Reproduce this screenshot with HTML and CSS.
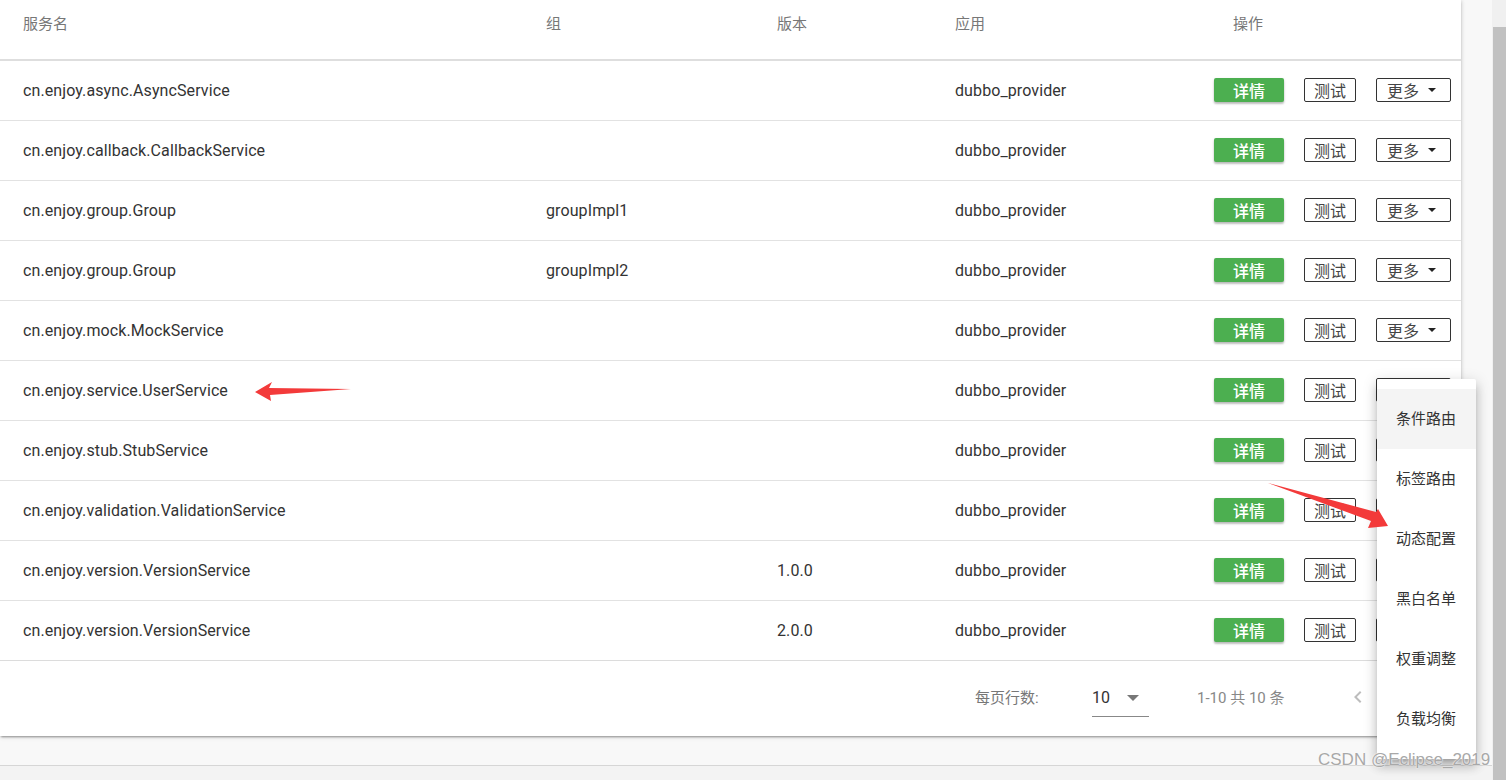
FILE: index.html
```html
<!DOCTYPE html>
<html lang="zh">
<head>
<meta charset="utf-8">
<title>服务查询</title>
<link rel="stylesheet" href="styles.css">
</head>
<body>
<div class="page">
  <div class="content">
    <div class="card">
      <div class="row head">
        <div class="c1">服务名</div>
        <div class="c2">组</div>
        <div class="c3">版本</div>
        <div class="c4">应用</div>
        <div class="c5 op-head">操作</div>
      </div>
      <div class="row">
        <div class="c1">cn.enjoy.async.AsyncService</div><div class="c2"></div><div class="c3"></div><div class="c4">dubbo_provider</div>
        <div class="c5 ops"><span class="btn detail">详情</span><span class="btn outline test">测试</span><span class="btn outline more">更多<i class="caret"></i></span></div>
      </div>
      <div class="row">
        <div class="c1">cn.enjoy.callback.CallbackService</div><div class="c2"></div><div class="c3"></div><div class="c4">dubbo_provider</div>
        <div class="c5 ops"><span class="btn detail">详情</span><span class="btn outline test">测试</span><span class="btn outline more">更多<i class="caret"></i></span></div>
      </div>
      <div class="row">
        <div class="c1">cn.enjoy.group.Group</div><div class="c2">groupImpl1</div><div class="c3"></div><div class="c4">dubbo_provider</div>
        <div class="c5 ops"><span class="btn detail">详情</span><span class="btn outline test">测试</span><span class="btn outline more">更多<i class="caret"></i></span></div>
      </div>
      <div class="row">
        <div class="c1">cn.enjoy.group.Group</div><div class="c2">groupImpl2</div><div class="c3"></div><div class="c4">dubbo_provider</div>
        <div class="c5 ops"><span class="btn detail">详情</span><span class="btn outline test">测试</span><span class="btn outline more">更多<i class="caret"></i></span></div>
      </div>
      <div class="row">
        <div class="c1">cn.enjoy.mock.MockService</div><div class="c2"></div><div class="c3"></div><div class="c4">dubbo_provider</div>
        <div class="c5 ops"><span class="btn detail">详情</span><span class="btn outline test">测试</span><span class="btn outline more">更多<i class="caret"></i></span></div>
      </div>
      <div class="row">
        <div class="c1">cn.enjoy.service.UserService</div><div class="c2"></div><div class="c3"></div><div class="c4">dubbo_provider</div>
        <div class="c5 ops"><span class="btn detail">详情</span><span class="btn outline test">测试</span><span class="btn outline more">更多<i class="caret"></i></span></div>
      </div>
      <div class="row">
        <div class="c1">cn.enjoy.stub.StubService</div><div class="c2"></div><div class="c3"></div><div class="c4">dubbo_provider</div>
        <div class="c5 ops"><span class="btn detail">详情</span><span class="btn outline test">测试</span><span class="btn outline more">更多<i class="caret"></i></span></div>
      </div>
      <div class="row">
        <div class="c1">cn.enjoy.validation.ValidationService</div><div class="c2"></div><div class="c3"></div><div class="c4">dubbo_provider</div>
        <div class="c5 ops"><span class="btn detail">详情</span><span class="btn outline test">测试</span><span class="btn outline more">更多<i class="caret"></i></span></div>
      </div>
      <div class="row">
        <div class="c1">cn.enjoy.version.VersionService</div><div class="c2"></div><div class="c3">1.0.0</div><div class="c4">dubbo_provider</div>
        <div class="c5 ops"><span class="btn detail">详情</span><span class="btn outline test">测试</span><span class="btn outline more">更多<i class="caret"></i></span></div>
      </div>
      <div class="row last">
        <div class="c1">cn.enjoy.version.VersionService</div><div class="c2"></div><div class="c3">2.0.0</div><div class="c4">dubbo_provider</div>
        <div class="c5 ops"><span class="btn detail">详情</span><span class="btn outline test">测试</span><span class="btn outline more">更多<i class="caret"></i></span></div>
      </div>
      <div class="footer">
        <span class="rpp">每页行数:</span>
        <span class="select"><span class="sel-val">10</span><i class="sel-caret"></i></span>
        <span class="range">1-10 共 10 条</span>
        <span class="pager">
          <svg width="24" height="24" viewBox="0 0 24 24"><path d="M15.41 16.59 10.83 12l4.58-4.59L14 6l-6 6 6 6z" fill="#bdbdbd"/></svg>
          <svg width="24" height="24" viewBox="0 0 24 24"><path d="M8.59 16.59 13.17 12 8.59 7.41 10 6l6 6-6 6z" fill="#bdbdbd"/></svg>
        </span>
      </div>
    </div>
    <div class="under"></div>
  </div>
  <div class="scrollbar"><div class="thumb"></div></div>

  <div class="menu">
    <div class="item active">条件路由</div>
    <div class="item">标签路由</div>
    <div class="item">动态配置</div>
    <div class="item">黑白名单</div>
    <div class="item">权重调整</div>
    <div class="item">负载均衡</div>
  </div>

  <svg class="arrows" width="1506" height="780" viewBox="0 0 1506 780">
    <polygon points="255,392 272,382 269,388 351,389 270,395 271,401" fill="#f33a3a"/>
    <polygon points="1268,483 1376,512 1378,509 1388,526 1368,528 1371,521" fill="#f33a3a"/>
  </svg>

  <div class="watermark">CSDN @Eclipse_2019</div>
</div>
</body>
</html>
```
FILE: styles.css
```css
* { box-sizing: border-box; }
html, body { margin: 0; padding: 0; }
body {
  width: 1506px;
  height: 780px;
  overflow: hidden;
  font-family: Roboto, "Noto Sans CJK SC", sans-serif;
  background: #f3f3f3;
}
.page {
  position: relative;
  display: flex;
  width: 1506px;
  height: 780px;
}
.content {
  width: 1492px;
  height: 780px;
  background: linear-gradient(#f8f8f8, #f8f8f8) no-repeat 0 0 / 1492px 766px, #f3f3f3;
}
.card {
  width: 1461px;
  background: #fff;
  box-shadow: 0 2px 2px -1px rgba(0,0,0,.35), 0 1px 5px 0 rgba(0,0,0,.12), 1px 0 3px rgba(0,0,0,.08);
  position: relative;
  z-index: 1;
}
.under {
  height: 30px;
  border-bottom: 1px solid #d6d6d6;
}

.row {
  display: grid;
  grid-template-columns: 523px 231px 178px 258px 271px;
  height: 60px;
  align-items: center;
  border-bottom: 1px solid #e2e2e2;
  font-size: 16px;
  letter-spacing: 0.1px;
  color: #333;
}
.row.head {
  height: 61px;
  align-items: start;
  padding-top: 12px;
  border-bottom: 2px solid #dedede;
  font-size: 15px;
  letter-spacing: 0;
  color: #777;
}
.row > div { padding-left: 23px; white-space: nowrap; }
.row.head .op-head { padding-left: 43px; }
.row.last { border-bottom: 1px solid #dcdcdc; }

.ops { display: flex; align-items: center; gap: 20px; }
.row > .ops { padding-left: 24px; padding-bottom: 2px; letter-spacing: 0; }
.btn {
  height: 24px;
  display: inline-flex;
  align-items: center;
  justify-content: center;
  font-size: 16px;
  border-radius: 2px;
}
.detail {
  width: 70px;
  background: #4caf50;
  color: #fff;
  font-weight: 500;
  box-shadow: 0 2px 2px rgba(0,0,0,.2), 0 1px 3px rgba(0,0,0,.12);
}
.outline {
  border: 1px solid #333;
  color: #444;
  background: #fff;
}
.test { width: 52px; }
.more { width: 75px; gap: 9px; justify-content: flex-start; padding-left: 10px; }
.caret {
  width: 0; height: 0;
  border-left: 4px solid transparent;
  border-right: 4px solid transparent;
  border-top: 4px solid #222;
}

.footer {
  height: 75px;
  display: flex;
  align-items: center;
  font-size: 15px;
  color: #777;
  padding-left: 975px;
  padding-bottom: 4px;
}
.rpp { width: 117px; }
.select {
  width: 57px;
  height: 41px;
  display: flex;
  align-items: flex-start;
  padding-top: 12px;
  line-height: 20px;
  border-bottom: 1px solid #888;
  color: #333;
  font-size: 16px;
}
.sel-val { width: 35px; }
.sel-caret {
  width: 0; height: 0;
  margin-top: 7px;
  border-left: 6px solid transparent;
  border-right: 6px solid transparent;
  border-top: 6px solid #777;
}
.range { margin-left: 48px; color: #888; }
.pager { margin-left: 62px; display: flex; gap: 20px; }

.scrollbar {
  width: 14px;
  height: 780px;
  background: #f0f0f0;
  padding-top: 27px;
  padding-left: 1px;
}
.thumb { height: 753px; background: #c1c1c1; }

.menu {
  position: absolute;
  left: 1377px;
  top: 379px;
  width: 99px;
  padding: 10px 0;
  background: #fff;
  border-radius: 2px;
  box-shadow: 0 5px 5px -3px rgba(0,0,0,.2), 0 8px 10px 1px rgba(0,0,0,.14), 0 3px 14px 2px rgba(0,0,0,.12);
  z-index: 5;
}
.item {
  height: 60px;
  display: flex;
  align-items: center;
  padding-left: 19px;
  padding-bottom: 3px;
  font-size: 15px;
  color: #333;
}
.item.active { background: #f4f4f4; }

.arrows { position: absolute; left: 0; top: 0; pointer-events: none; z-index: 6; }

.watermark {
  position: absolute;
  left: 1318px;
  top: 750px;
  font-family: "Liberation Sans", sans-serif;
  font-size: 17px;
  color: #a8a8a8;
  text-shadow: 0 0 2px #fff, 0 0 1px #fff;
  z-index: 7;
}
```
